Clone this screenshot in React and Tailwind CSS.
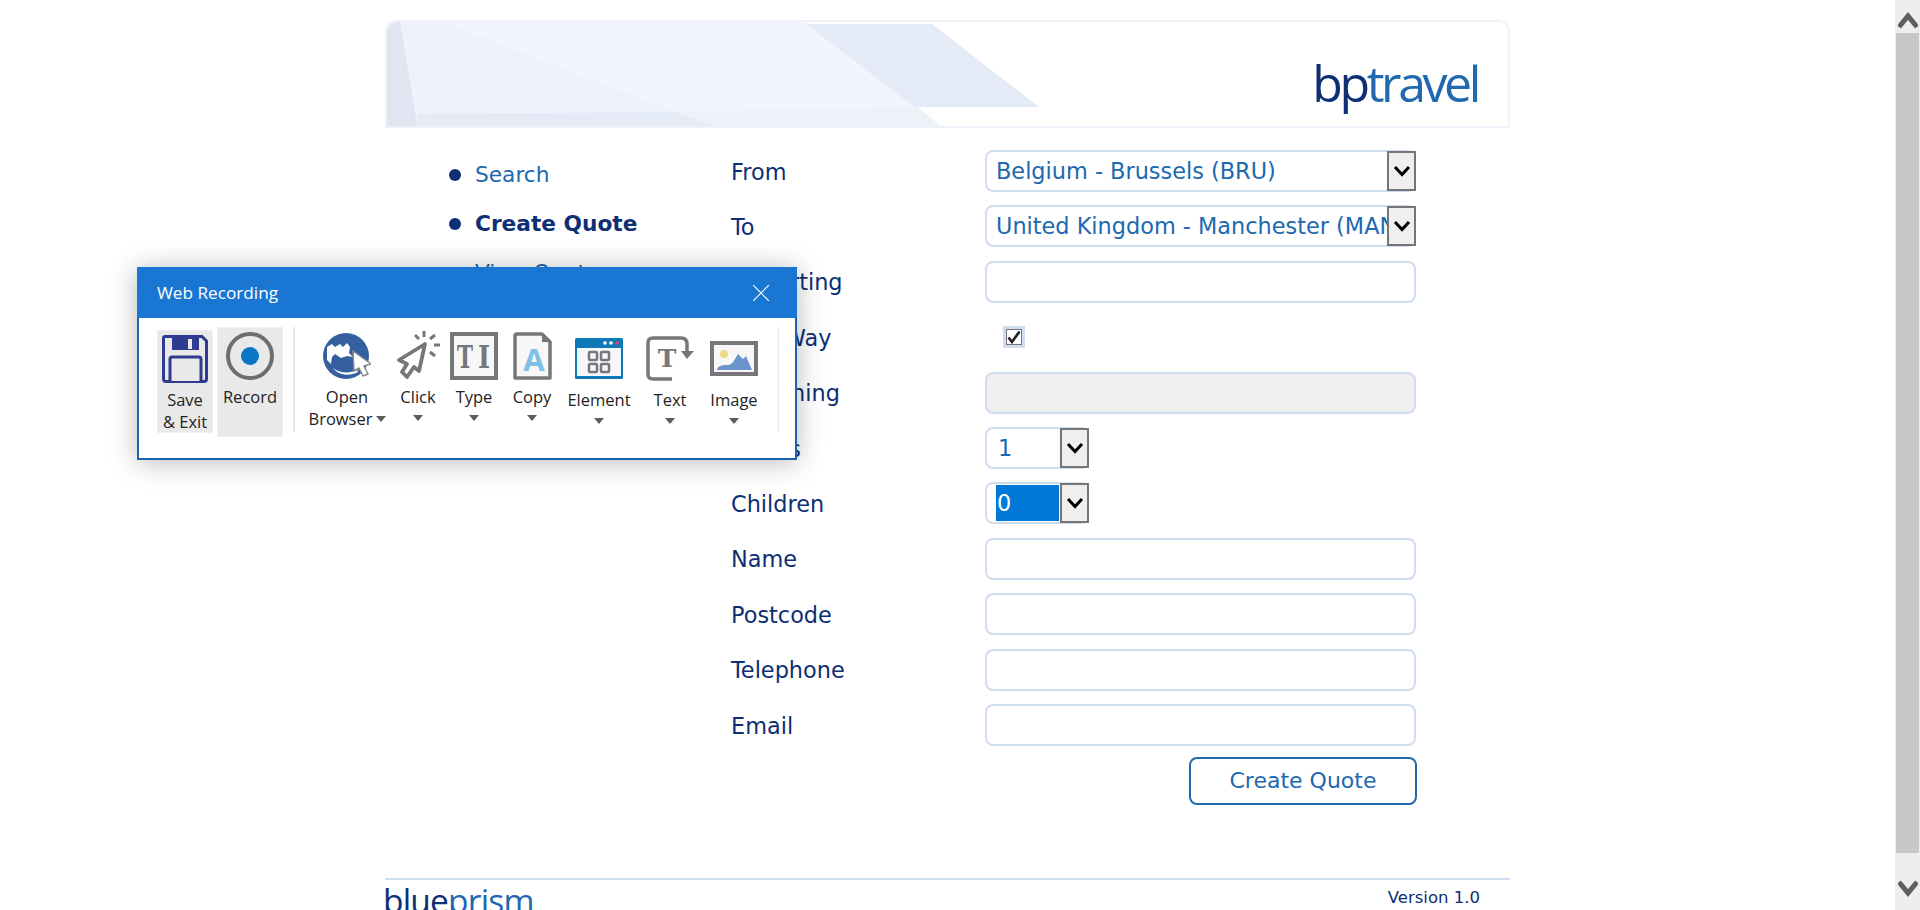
import React from 'react';

const Chevron = () => (
    <svg width="18" height="14" viewBox="0 0 18 14" fill="none">
        <path d="M2 3 L9 10.5 L16 3" stroke="#000" strokeWidth="3" />
    </svg>
);

const SelectArrow = () => (
    <div className="w-[29px] -mr-[2px] -my-px bg-[#efefef] border-2 border-[#767676] flex items-center justify-center shrink-0">
        <Chevron />
    </div>
);

const Row = ({ label, children }) => (
    <div className="flex h-[42px]">
        <div className="h-full pt-[3px] flex items-center w-[254px] text-[#0e2f73]">{label}</div>
        {children}
    </div>
);

const Select = ({ value }) => (
    <div className="w-[431px] h-full border-2 border-[#cfddf0] rounded-lg flex items-stretch">
        <div className="flex-1 pl-[9px] pt-[1px] flex items-center whitespace-nowrap overflow-hidden text-[#2068b0]">{value}</div>
        <SelectArrow />
    </div>
);

const TextBox = ({ disabled }) => (
    <div className={`w-[431px] h-full border-2 border-[#cfddf0] rounded-lg ${disabled ? 'bg-[#efefef]' : 'bg-white'}`} />
);

const Caret = ({ className }) => (
    <svg width="10" height="6" viewBox="0 0 10 6" className={className}>
        <path d="M0 0 H10 L5 6 Z" fill="#5c5c5c" />
    </svg>
);

const ToolItem = ({ className, boxClass, icon, label, caret = true }) => (
    <div className={`flex flex-col items-center shrink-0 ${className}`}>
        <div className={`flex justify-center ${boxClass}`}>{icon}</div>
        <div className="h-[22px] leading-[22px] whitespace-nowrap">{label}</div>
        {caret && <Caret className="mt-[7px]" />}
    </div>
);

const FloppyIcon = () => (
    <svg width="46" height="48" viewBox="0 0 46 48" className="shrink-0">
        <path d="M3 1.5 H40 L44.5 6 V44 Q44.5 46.5 42 46.5 H4 Q1.5 46.5 1.5 44 V3 Q1.5 1.5 3 1.5 Z" fill="#e9e9e9" stroke="#2e3b90" strokeWidth="3" />
        <path d="M10 1 H37 V15 H10 Z" fill="#2e3b90" />
        <rect x="26" y="4" width="4" height="10" fill="#e9e9e9" />
        <path d="M8 46 V24 Q8 22 10 22 H37 Q39 22 39 24 V46" fill="#e9e9e9" stroke="#2e3b90" strokeWidth="3" />
    </svg>
);

const RecordIcon = () => (
    <svg width="48" height="48" viewBox="0 0 48 48" className="shrink-0">
        <circle cx="24" cy="24" r="22" fill="none" stroke="#6e6e6e" strokeWidth="4" />
        <circle cx="24" cy="24" r="9" fill="#0b76c5" />
    </svg>
);

const GlobeIcon = () => (
    <svg width="48" height="46" viewBox="0 0 48 46" className="mt-[3px]">
        <circle cx="23" cy="23" r="23" fill="#34609f" />
        <path d="M4 14 L9 11 L12 14 L17 11 L20 14 L24 10 L27 14 L26 20 L30 24 L24 23 L18 25 L12 21 L9 24 L8 31 L4 27 Z" fill="#fff" />
        <path d="M10 35 C16 40 26 41 34 37 L35 39 C26 44 15 42 10 35 Z" fill="#fff" />
        <path d="M30 18 L48 31 L41 33 L45 41 L40 43 L36 35 L31 38 Z" fill="#fff" stroke="#8a8a8a" strokeWidth="1.5" strokeLinejoin="round" />
    </svg>
);

const ClickIcon = () => (
    <svg width="43" height="48" viewBox="0 0 43 48" fill="none" stroke="#77767a">
        <path d="M28 13 L2 29 L10 33 L5 41 L10 46 L17 36 L22 40 Z" strokeWidth="3.8" strokeLinejoin="round" />
        <path d="M27 0 V6 M18 4 L22 8 M38 4 L33 8 M37 14 H43 M33 21 L38 25" strokeWidth="3" />
    </svg>
);

const TypeIcon = () => (
    <svg width="48" height="48" viewBox="0 0 48 48" className="mt-[2px]">
        <rect x="2" y="2" width="44" height="44" fill="#f7f7f7" stroke="#77767a" strokeWidth="4" />
        <text x="7" y="36" textLength="16" lengthAdjust="spacingAndGlyphs" fontFamily="'DejaVu Serif', serif" fontWeight="700" fontSize="32" fill="#77767a">T</text>
        <text x="28" y="36" textLength="12" lengthAdjust="spacingAndGlyphs" fontFamily="'DejaVu Serif', serif" fontWeight="700" fontSize="32" fill="#77767a">I</text>
    </svg>
);

const CopyIcon = () => (
    <svg width="39" height="48" viewBox="0 0 39 48" className="mt-[2px]">
        <path d="M2 4 Q2 2 4 2 H29 L37 10 V46 H2 Z" fill="#f7f7f7" stroke="#77767a" strokeWidth="3.5" strokeLinejoin="round" />
        <path d="M29 2 V10 H37 Z" fill="#77767a" />
        <text x="21" y="39" textAnchor="middle" fontFamily="'Open Sans', sans-serif" fontWeight="700" fontSize="31" fill="#7fc0e8">A</text>
    </svg>
);

const ElementIcon = () => (
    <svg width="48" height="41" viewBox="0 0 48 41" className="mt-[8px]">
        <rect width="48" height="41" rx="1.5" fill="#0f78b8" />
        <rect x="2" y="10" width="44" height="28" fill="#f5f7f9" />
        <circle cx="30" cy="5" r="1.8" fill="#fff" />
        <circle cx="36" cy="5" r="1.8" fill="#fff" />
        <circle cx="42" cy="5" r="1.8" fill="#ef4056" />
        <g fill="none" stroke="#77767a" strokeWidth="2.5">
            <rect x="14" y="14" width="8" height="8" rx="1" />
            <rect x="26" y="14" width="8" height="8" rx="1" />
            <rect x="14" y="26" width="8" height="8" rx="1" />
            <rect x="26" y="26" width="8" height="8" rx="1" />
        </g>
    </svg>
);

const TextIcon = () => (
    <svg width="48" height="45" viewBox="0 0 48 45" className="mt-[6px]">
        <path d="M26 43 H7 Q2 43 2 38 V7 Q2 2 7 2 H35 Q41 2 41 8 V18" fill="none" stroke="#77767a" strokeWidth="3.5" />
        <path d="M35 15 H48 L41 23 Z" fill="#77767a" />
        <text x="21" y="31" textAnchor="middle" fontFamily="'DejaVu Serif', serif" fontWeight="700" fontSize="25" fill="#77767a">T</text>
    </svg>
);

const ImageIcon = () => (
    <svg width="48" height="35" viewBox="0 0 48 35" className="mt-[11px]">
        <rect x="2" y="2" width="44" height="31" fill="#f7f7f7" stroke="#77767a" strokeWidth="4" />
        <circle cx="14" cy="13" r="4" fill="#efdc7e" />
        <path d="M7 29 Q7 24 17 24 Q22 24 25 18 L28 13 L33 18 L36 15 L42 29 Z" fill="#6b93cc" />
    </svg>
);

const WebRecording = () => (
    <div className="absolute left-[137px] top-[267px] w-[660px] h-[193px] bg-white border-2 border-t-0 border-[#1a63ad] shadow-[0_2px_26px_rgba(0,0,0,0.28)] font-['Open_Sans',sans-serif] text-[16.5px] text-[#222]">
        <div className="-mx-[2px] h-[51px] bg-[#1976d2] flex items-center justify-between pl-[20px] pr-[28px] text-white text-[17.2px]">
            <span>Web Recording</span>
            <svg width="16" height="16" viewBox="0 0 16 16" stroke="#fff" strokeWidth="1.2">
                <path d="M0 0 L16 16 M16 0 L0 16" />
            </svg>
        </div>
        <div className="flex items-start pt-[9px] pl-[18px]">
            <div className="mt-[3px] w-[56px] h-[103px] bg-[#e9e9e9] border border-[#efefef] flex flex-col items-center pt-[4px]">
                <FloppyIcon />
                <div className="mt-[6px] leading-[22px] text-center">Save<br />&amp; Exit</div>
            </div>
            <div className="ml-[4px] w-[66px] h-[110px] bg-[#e9e9e9] border border-[#efefef] flex flex-col items-center pt-[4px]">
                <RecordIcon />
                <div className="mt-[6px] leading-[22px]">Record</div>
            </div>
            <div className="ml-[10px] w-[2px] h-[105px] bg-[#e8e8e8]" />
            <div className="ml-[16px] w-[72px] pt-[3px] flex flex-col items-center shrink-0">
                <div className="flex justify-center h-[56px]"><GlobeIcon /></div>
                <div className="h-[22px] leading-[22px]">Open</div>
                <div className="h-[22px] leading-[22px] flex items-center gap-[3px] whitespace-nowrap">Browser<Caret /></div>
            </div>
            <ToolItem className="ml-[5px] w-[60px] pt-[4px]" boxClass="h-[55px]" icon={<ClickIcon />} label="Click" />
            <ToolItem className="ml-[2px] w-[48px] pt-[3px]" boxClass="h-[56px]" icon={<TypeIcon />} label="Type" />
            <ToolItem className="ml-[7px] w-[54px] pt-[3px]" boxClass="h-[56px]" icon={<CopyIcon />} label="Copy" />
            <ToolItem className="ml-[5px] w-[70px] pt-[3px]" boxClass="h-[59px]" icon={<ElementIcon />} label="Element" />
            <ToolItem className="ml-[12px] w-[48px] pt-[3px]" boxClass="h-[59px]" icon={<TextIcon />} label="Text" />
            <ToolItem className="ml-[16px] w-[48px] pt-[3px]" boxClass="h-[59px]" icon={<ImageIcon />} label="Image" />
            <div className="ml-[20px] w-[1px] h-[105px] bg-[#e8e8e8]" />
        </div>
    </div>
);

const HeaderArt = () => (
    <svg className="absolute inset-0" width="1125" height="108" viewBox="0 0 1125 108" preserveAspectRatio="none">
        <path d="M0 0 H419 L558 108 H0 Z" fill="#f2f5fb" />
        <path d="M56 0 L335 108 H0 V0 Z" fill="#eff2f8" />
        <path d="M419 2 H545 L652 85 H528 Z" fill="#e4eaf6" />
        <path d="M288 90 L531 85 L558 108 H335 Z" fill="#eff1f8" />
        <path d="M31 92 L288 90 L335 108 H31 Z" fill="#e5ebf6" />
        <path d="M0 0 H13 L31 108 H0 Z" fill="#e1e5f1" />
    </svg>
);

const Scrollbar = () => (
    <div className="w-[25px] h-[910px] bg-[#eeeeee] flex flex-col shrink-0">
        <div className="h-[33px] flex items-start justify-center pt-[12px]">
            <svg width="20" height="17" viewBox="0 0 20 17" fill="none">
                <path d="M1 15 L10 4 L19 15" stroke="#5f5f5f" strokeWidth="5" />
            </svg>
        </div>
        <div className="flex-1 mx-px bg-[#c8c8c8]" />
        <div className="h-[57px] flex items-start justify-center pt-[27px]">
            <svg width="20" height="17" viewBox="0 0 20 17" fill="none">
                <path d="M1 2 L10 13 L19 2" stroke="#5f5f5f" strokeWidth="5" />
            </svg>
        </div>
    </div>
);

const App = () => {
    const navItems = [
        { text: 'Search', cls: 'text-[#2068b0]' },
        { text: 'Create Quote', cls: 'text-[#0e2f73] font-bold' },
        { text: 'View Quotes', cls: 'text-[#2068b0]' },
    ];

    return (
        <div className="relative flex h-[910px] overflow-hidden bg-white font-['DejaVu_Sans',sans-serif] text-[22.4px]">
            <div className="flex-1 overflow-hidden">
                <div className="w-[1125px] mx-auto pt-[20px]">
                    <div className="relative h-[108px] rounded-t-xl border-2 border-[#eef2fa] overflow-hidden">
                        <HeaderArt />
                        <div className="absolute right-[30px] top-[25px] text-[50px] leading-[72px] tracking-[-3.4px] font-normal font-['Open_Sans',sans-serif] text-[#2068b0]">
                            <span className="text-[#0e2f73]">bp</span>travel
                        </div>
                    </div>

                    <div className="flex pt-[22px]">
                        <ul className="w-[346px] pl-[64px] shrink-0 text-[21.7px]">
                            {navItems.map((item) => (
                                <li key={item.text} className="h-[49px] flex items-center gap-[14px]">
                                    <span className="w-[12px] h-[12px] rounded-full bg-[#0e2f73]" />
                                    <span className={`pt-[2px] ${item.cls}`}>{item.text}</span>
                                </li>
                            ))}
                        </ul>

                        <div className="w-[686px]">
                            <div className="flex flex-col gap-[13.4px]">
                                <Row label="From"><Select value="Belgium - Brussels (BRU)" /></Row>
                                <Row label="To"><Select value="United Kingdom - Manchester (MAN)" /></Row>
                                <Row label="Departing"><TextBox /></Row>
                                <Row label="One Way">
                                    <div className="h-full flex items-center pl-[18px]">
                                        <div className="w-[22px] h-[22px] border-[3px] border-[#cfddf0] bg-[#767676] p-px">
                                            <div className="w-full h-full bg-white flex items-center justify-center">
                                                <svg width="14" height="14" viewBox="0 0 14 14" fill="none">
                                                    <path d="M1.5 7.5 L5 12 L12.5 1.5" stroke="#222" strokeWidth="2.6" />
                                                </svg>
                                            </div>
                                        </div>
                                    </div>
                                </Row>
                                <Row label="Returning"><TextBox disabled /></Row>
                                <Row label="Adults">
                                    <div className="w-[104px] h-full border-2 border-[#cfddf0] rounded-lg flex items-stretch">
                                        <div className="flex-1 pl-[11px] pt-[1px] flex items-center text-[#2068b0]">1</div>
                                        <SelectArrow />
                                    </div>
                                </Row>
                                <Row label="Children">
                                    <div className="w-[104px] h-full border-2 border-[#cfddf0] rounded-lg flex items-stretch">
                                        <div className="flex-1 pl-[9px] py-[1px] pr-px flex">
                                            <div className="w-full bg-[#0078d7] text-white flex items-center pl-px">0</div>
                                        </div>
                                        <SelectArrow />
                                    </div>
                                </Row>
                                <Row label="Name"><TextBox /></Row>
                                <Row label="Postcode"><TextBox /></Row>
                                <Row label="Telephone"><TextBox /></Row>
                                <Row label="Email"><TextBox /></Row>
                            </div>
                            <div className="flex justify-end mt-[11px]">
                                <button className="w-[228px] h-[48px] border-2 border-[#2068b0] rounded-lg text-[#2068b0] text-[22px]">Create Quote</button>
                            </div>
                        </div>
                    </div>

                    <div className="mt-[73px] border-t-2 border-[#cfddf0] flex justify-between">
                        <div className="-ml-[2px] text-[33.5px] leading-[40px] font-['Open_Sans',sans-serif] tracking-[-0.8px] text-[#2068b0]">
                            <span className="text-[#0e2f73] font-medium">blue</span>prism
                        </div>
                        <div className="pr-[30px] pt-[7px] text-[16.5px] leading-[22px] text-[#0e2f73]">Version 1.0</div>
                    </div>
                </div>
            </div>
            <Scrollbar />
            <WebRecording />
        </div>
    );
};

export default App;
